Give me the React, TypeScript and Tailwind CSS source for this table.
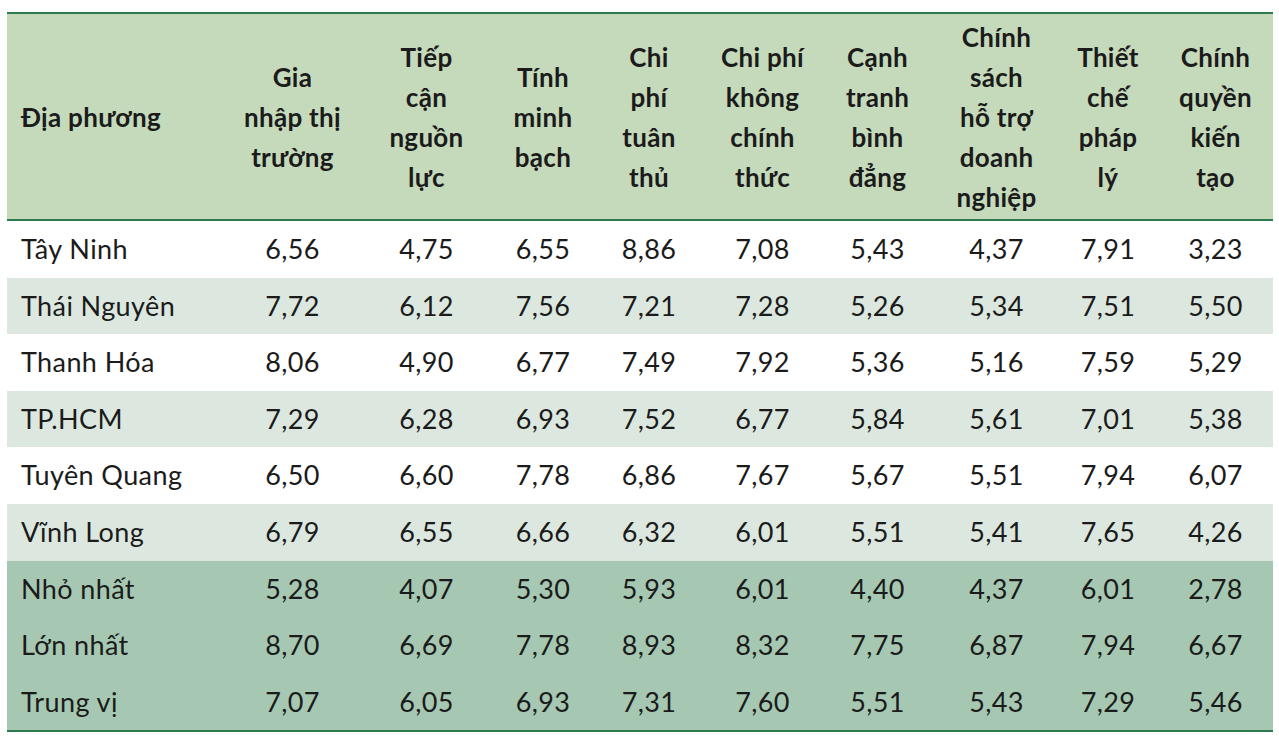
import * as React from 'react'

const HEADERS: string[][] = [
  ['Gia', 'nhập thị', 'trường'],
  ['Tiếp', 'cận', 'nguồn', 'lực'],
  ['Tính', 'minh', 'bạch'],
  ['Chi', 'phí', 'tuân', 'thủ'],
  ['Chi phí', 'không', 'chính', 'thức'],
  ['Cạnh', 'tranh', 'bình', 'đẳng'],
  ['Chính', 'sách', 'hỗ trợ', 'doanh', 'nghiệp'],
  ['Thiết', 'chế', 'pháp', 'lý'],
  ['Chính', 'quyền', 'kiến', 'tạo'],
]

type Row = { name: string; values: string[]; tone: 'white' | 'light' | 'dark' }

const ROWS: Row[] = [
  { name: 'Tây Ninh', tone: 'white', values: ['6,56', '4,75', '6,55', '8,86', '7,08', '5,43', '4,37', '7,91', '3,23'] },
  { name: 'Thái Nguyên', tone: 'light', values: ['7,72', '6,12', '7,56', '7,21', '7,28', '5,26', '5,34', '7,51', '5,50'] },
  { name: 'Thanh Hóa', tone: 'white', values: ['8,06', '4,90', '6,77', '7,49', '7,92', '5,36', '5,16', '7,59', '5,29'] },
  { name: 'TP.HCM', tone: 'light', values: ['7,29', '6,28', '6,93', '7,52', '6,77', '5,84', '5,61', '7,01', '5,38'] },
  { name: 'Tuyên Quang', tone: 'white', values: ['6,50', '6,60', '7,78', '6,86', '7,67', '5,67', '5,51', '7,94', '6,07'] },
  { name: 'Vĩnh Long', tone: 'light', values: ['6,79', '6,55', '6,66', '6,32', '6,01', '5,51', '5,41', '7,65', '4,26'] },
  { name: 'Nhỏ nhất', tone: 'dark', values: ['5,28', '4,07', '5,30', '5,93', '6,01', '4,40', '4,37', '6,01', '2,78'] },
  { name: 'Lớn nhất', tone: 'dark', values: ['8,70', '6,69', '7,78', '8,93', '8,32', '7,75', '6,87', '7,94', '6,67'] },
  { name: 'Trung vị', tone: 'dark', values: ['7,07', '6,05', '6,93', '7,31', '7,60', '5,51', '5,43', '7,29', '5,46'] },
]

const TONE: Record<Row['tone'], string> = {
  white: 'bg-white',
  light: 'bg-[#dce8df]',
  dark: 'bg-[#a6c8b2]',
}

// fixed column widths, total 1266px
const GRID =
  'grid grid-cols-[218px_135px_133px_100px_112px_115px_115px_123px_100px_115px]'

export default function App() {
  return (
    <div className="min-h-[739px] w-[1279px] bg-white pl-[7px] pt-[12px] font-['Lato',sans-serif] text-[#1b1b1b]">
      <div className="w-[1266px] border-y-2 border-[#2d7a4c]">
        <div className={`${GRID} h-[207px] border-b-2 border-[#2d7a4c] bg-[#c5d9bb] text-[26px] font-bold leading-[40px] tracking-[0.3px]`}>
          <div className="flex items-center pl-[14px]">Địa phương</div>
          {HEADERS.map((lines, i) => (
            <div key={i} className="flex flex-col items-center justify-center whitespace-nowrap text-center">
              {lines.map((l) => (
                <span key={l}>{l}</span>
              ))}
            </div>
          ))}
        </div>
        {ROWS.map((row) => (
          <div key={row.name} className={`${GRID} h-[56.6px] items-center text-[27px] tracking-[0.4px] ${TONE[row.tone]}`}>
            <div className="pl-[14px]">{row.name}</div>
            {row.values.map((v, i) => (
              <div key={i} className="text-center">
                {v}
              </div>
            ))}
          </div>
        ))}
      </div>
    </div>
  )
}
